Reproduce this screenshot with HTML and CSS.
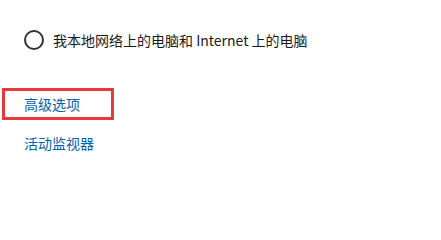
FILE: index.html
```html
<!DOCTYPE html>
<html lang="zh-CN">
<head>
<meta charset="utf-8">
<link rel="stylesheet" href="styles.css">
</head>
<body>
<div class="page">
  <div class="radio-row">
    <span class="radio"></span>
    <span class="radio-label">我本地网络上的电脑和 Internet 上的电脑</span>
  </div>
  <div class="highlight">
    <a class="link" href="#">高级选项</a>
  </div>
  <div class="link-row">
    <a class="link" href="#">活动监视器</a>
  </div>
</div>
</body>
</html>
```
FILE: styles.css
```css
html, body {
  margin: 0;
  padding: 0;
  background: #ffffff;
}
.page {
  width: 441px;
  height: 218px;
  font-family: "Noto Sans CJK SC", "Open Sans", sans-serif;
  font-size: 14px;
}
.radio-row {
  display: flex;
  align-items: center;
  gap: 9px;
  margin-top: 30px;
  padding-left: 24px;
  height: 20px;
}
.radio {
  width: 20px;
  height: 20px;
  box-sizing: border-box;
  border: 2px solid #333333;
  border-radius: 50%;
  flex: none;
}
.radio-label {
  color: #1a1a1a;
  line-height: 20px;
}
.highlight {
  margin-top: 38px;
  margin-left: 2px;
  width: 112px;
  height: 32px;
  box-sizing: border-box;
  border: 3px solid #e8393d;
  padding-left: 19px;
  line-height: 26px;
}
.link-row {
  margin-top: 13px;
  padding-left: 24px;
  line-height: 20px;
}
.link {
  color: #0063b1;
  text-decoration: none;
}
```
